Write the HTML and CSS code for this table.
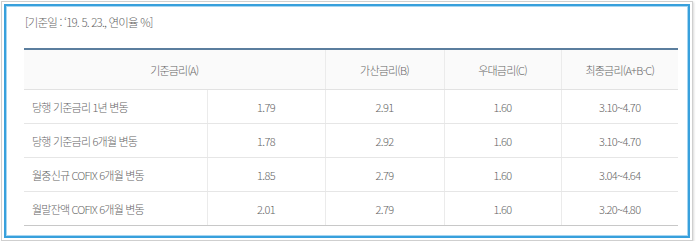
FILE: index.html
```html
<!DOCTYPE html>
<html lang="ko">
<head>
<meta charset="utf-8">
<link rel="stylesheet" href="styles.css">
</head>
<body>
<div class="frame">
  <div class="box">
    <p class="note">[기준일 : ‘19. 5. 23., 연이율 %]</p>
    <table class="rates">
      <colgroup>
        <col class="c1"><col class="c2"><col class="c3"><col class="c4"><col class="c5">
      </colgroup>
      <thead>
        <tr>
          <th colspan="2">기준금리(A)</th>
          <th>가산금리(B)</th>
          <th>우대금리(C)</th>
          <th>최종금리(A+B-C)</th>
        </tr>
      </thead>
      <tbody>
        <tr><td class="name">당행 기준금리 1년 변동</td><td>1.79</td><td>2.91</td><td>1.60</td><td>3.10~4.70</td></tr>
        <tr><td class="name">당행 기준금리 6개월 변동</td><td>1.78</td><td>2.92</td><td>1.60</td><td>3.10~4.70</td></tr>
        <tr><td class="name">월중신규 COFIX 6개월 변동</td><td>1.85</td><td>2.79</td><td>1.60</td><td>3.04~4.64</td></tr>
        <tr><td class="name">월말잔액 COFIX 6개월 변동</td><td>2.01</td><td>2.79</td><td>1.60</td><td>3.20~4.80</td></tr>
      </tbody>
    </table>
  </div>
</div>
</body>
</html>
```
FILE: styles.css
```css
html, body {
  margin: 0;
  padding: 0;
  background: #ffffff;
}
body {
  font-family: "Noto Sans CJK KR", "Noto Sans", sans-serif;
  color: #666666;
  font-size: 11px;
}
.frame {
  margin: 1px 0 0 1px;
  width: 692px;
  height: 240px;
  border: 1px solid #cfcfcf;
  box-shadow: 1px 1px 2px rgba(0,0,0,0.15);
  padding: 2px;
  box-sizing: border-box;
  background: #fff;
}
.box {
  border: 2px solid #38a0dc;
  box-shadow: inset 0 0 0 1px #a6d6f2;
  height: 100%;
  box-sizing: border-box;
  padding: 8px 10px 6px 18px;
}
.note {
  margin: 0 0 18px 1px;
  line-height: 16px;
  font-size: 11.5px;
  font-weight: 300;
  color: #666;
  letter-spacing: -0.8px;
}
.rates {
  width: 654px;
  border-collapse: collapse;
  table-layout: fixed;
  border-top: 2px solid #5b7e9e;
  border-bottom: 1px solid #c8c8c8;
}
.c1 { width: 183px; }
.c2 { width: 118px; }
.c3 { width: 119px; }
.c4 { width: 117px; }
.c5 { width: 117px; }
.rates th {
  background: #fafafa;
  height: 39px;
  padding: 0;
  font-weight: 300;
  color: #666;
  border-bottom: 1px solid #e2e2e2;
  border-left: 1px solid #ebebeb;
  font-size: 11px;
  letter-spacing: -0.8px;
}
.rates th:first-child { border-left: none; }
.rates td {
  height: 33px;
  padding: 0;
  text-align: center;
  font-weight: 300;
  color: #666;
  font-size: 11px;
  border-bottom: 1px solid #e6e6e6;
  border-left: 1px solid #ebebeb;
  letter-spacing: -0.6px;
}
.rates td.name {
  text-align: left;
  padding-left: 8px;
  border-left: none;
  letter-spacing: -0.8px;
}
.rates tbody tr:last-child td { border-bottom: 1px solid #c8c8c8; }
```
